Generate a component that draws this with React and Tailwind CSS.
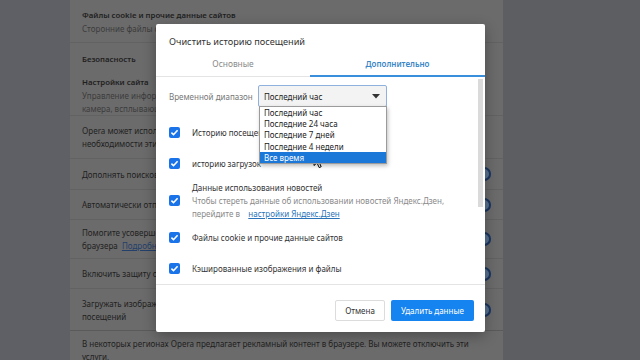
import React from 'react';

const options = ['Последний час', 'Последние 24 часа', 'Последние 7 дней', 'Последние 4 недели', 'Все время'];

const Toggle = () => (
  <div className="flex justify-end w-[26px] h-[14px] rounded-full bg-[#3f5d86] shrink-0">
    <div className="w-[14px] h-[14px] rounded-full border-2 border-[#1b355d] bg-[#58708f]" />
  </div>
);

const Check = () => (
  <div className="w-[11px] h-[11px] rounded-[2px] bg-[#1a73e8] flex items-center justify-center shrink-0">
    <svg width="11" height="11" viewBox="0 0 11 11">
      <path d="M2.4 5.7 L4.5 7.7 L8.6 3.2" fill="none" stroke="white" strokeWidth="1.6" />
    </svg>
  </div>
);

const Cursor = () => (
  <svg width="12" height="17" viewBox="0 0 12 17" className="absolute left-[313px] top-[152px]">
    <path d="M1 1 L1 13.5 L4 10.8 L6.2 15.6 L8.2 14.7 L6 10 L10 10 Z" fill="white" stroke="black" strokeWidth="1" strokeLinejoin="round" />
  </svg>
);

export default function App() {
  return (
    <div className="relative w-[640px] h-[360px] overflow-hidden flex bg-[#5d5e62] font-['Noto_Sans',sans-serif]">
      {/* dimmed page behind */}
      <div className="w-[70px] bg-[#5e6065]" />
      <div className="w-[433px] bg-[#6b6b6b] overflow-hidden text-[8px] leading-[13px] text-[#1f1f1f] whitespace-nowrap">
        <div className="h-[43px] pt-[2px] pl-[12px] flex flex-col justify-center border-b border-[#626262]">
          <div className="text-[7.8px] font-semibold">Файлы cookie и прочие данные сайтов</div>
          <div className="text-[#3c3c3c]">Сторонние файлы cookie разрешены</div>
        </div>
        <div className="h-[28px] pt-[4px] pl-[12px] flex items-center text-[7.8px] font-semibold">Безопасность</div>
        <div className="h-[45px] pt-[5px] pl-[12px] flex flex-col justify-center border-b border-[#626262]">
          <div className="text-[7.8px] font-semibold">Настройки сайта</div>
          <div className="text-[#3c3c3c]">Управление информацией, которую могут использовать сайты (местоположение,</div>
          <div className="text-[#3c3c3c]">камера, всплывающие окна и т. д.)</div>
        </div>
        <div className="h-[43px] pl-[12px] flex flex-col justify-center border-b border-[#626262]">
          <div>Opera может использовать веб-службы для улучшения работы браузера. При</div>
          <div>необходимости эти службы можно отключить.</div>
        </div>
        <div className="h-[31px] pl-[12px] pr-[12px] flex items-center justify-between border-b border-[#626262]">
          <div>Дополнять поисковые запросы и адреса</div>
          <Toggle />
        </div>
        <div className="h-[30px] pl-[12px] pr-[12px] flex items-center justify-between border-b border-[#626262]">
          <div>Автоматически отправлять отчеты об аварийном завершении</div>
          <Toggle />
        </div>
        <div className="h-[39px] pl-[12px] pr-[12px] flex items-center justify-between border-b border-[#626262]">
          <div>
            <div>Помогите усовершенствовать Opera, отправляя информацию</div>
            <div>
              браузера&nbsp;&nbsp;<span className="text-[#233f6b] underline">Подробнее</span>
            </div>
          </div>
          <Toggle />
        </div>
        <div className="h-[30px] pl-[12px] pr-[12px] flex items-center justify-between border-b border-[#626262]">
          <div>Включить защиту от мошенничества</div>
          <Toggle />
        </div>
        <div className="h-[42px] pl-[12px] pr-[12px] flex items-center justify-between border-b border-[#5a5a5a]">
          <div>
            <div>Загружать изображения для предлагаемых источников</div>
            <div>посещений</div>
          </div>
          <Toggle />
        </div>
        <div className="pt-[6px] pl-[12px]">
          <div>В некоторых регионах Opera предлагает рекламный контент в браузере. Вы можете отключить эти</div>
          <div>услуги.</div>
        </div>
      </div>
      <div className="flex-1 bg-[#5d5e61]" />

      {/* dialog */}
      <div className="absolute left-[156px] top-[24px] w-[329px] h-[308px] bg-white rounded-[2px] shadow-[0_4px_14px_rgba(0,0,0,0.3)] flex flex-col whitespace-nowrap">
        <div className="h-[27px] pt-[9px] pl-[13px] text-[9.2px] leading-[18px] text-[#333]">Очистить историю посещений</div>
        <div className="mt-[2px] flex items-end h-[24px] text-[8.4px]">
          <div className="w-[154px] h-[24px] flex items-center justify-center border-b border-[#e4e4e4] text-[#8a8a8a]">Основные</div>
          <div className="flex-1 h-[24px] flex items-center justify-center border-b-2 border-[#3a8fdc] font-semibold text-[8px] text-[#3b86c6]">Дополнительно</div>
        </div>

        <div className="flex flex-1 min-h-0">
          <div className="flex-1 pt-[8px] pl-[13px] text-[8px] leading-[13px]">
            <div className="flex items-center h-[22px]">
              <span className="w-[89px] text-[#777]">Временной диапазон</span>
              <div className="relative w-[129px] h-[22px] border border-[#8fb1de] rounded-[2px] bg-[#f3f3f3] flex items-center justify-between pl-[5px] pr-[6px] text-[#222]">
                <span>Последний час</span>
                <svg width="8" height="5" viewBox="0 0 8 5">
                  <path d="M0 0 L8 0 L4 4.5 Z" fill="#333" />
                </svg>
                <div className="absolute left-0 top-[20px] w-[128px] bg-white border border-[#9b9b9b] shadow-[1px_2px_4px_rgba(0,0,0,0.25)] z-10">
                  {options.map((o, i) => (
                    <div
                      key={o}
                      className={i === 4 ? 'h-[11.2px] leading-[11.2px] pl-[4px] bg-[#1c78d8] text-white' : 'h-[11.2px] leading-[11.2px] pl-[4px] text-[#222]'}
                    >
                      {o}
                    </div>
                  ))}
                </div>
              </div>
            </div>

            <div className="mt-[10px] text-[#333]">
              <div className="h-[31px] flex items-center gap-[12px]">
                <Check />
                <span>Историю посещений</span>
              </div>
              <div className="h-[31px] flex items-center gap-[12px]">
                <Check />
                <span>историю загрузок</span>
              </div>
              <div className="h-[43px] flex items-center gap-[12px]">
                <Check />
                <div>
                  <div>Данные использования новостей</div>
                  <div className="text-[#8a8a8a]">Чтобы стереть данные об использовании новостей Яндекс.Дзен,</div>
                  <div className="text-[#8a8a8a]">
                    перейдите в&nbsp;&nbsp;&nbsp;&nbsp;<span className="text-[#2a73b8] underline">настройки Яндекс.Дзен</span>
                  </div>
                </div>
              </div>
              <div className="h-[31px] flex items-center gap-[12px]">
                <Check />
                <span>Файлы cookie и прочие данные сайтов</span>
              </div>
              <div className="h-[31px] flex items-center gap-[12px]">
                <Check />
                <span>Кэшированные изображения и файлы</span>
              </div>
            </div>
          </div>
          <div className="w-[5px] mr-[2px] pt-[2px]">
            <div className="h-[128px] bg-[#dadada]" />
          </div>
        </div>

        <div className="h-[48px] border-t border-[#e4e4e4] flex justify-end items-start gap-[6px] pt-[15px] pr-[11px] text-[8px]">
          <button className="w-[50px] h-[21px] border border-[#dcdcdc] rounded-[2px] bg-white text-[#333]">Отмена</button>
          <button className="w-[83px] h-[21px] rounded-[2px] bg-[#1583f0] text-white">Удалить данные</button>
        </div>
      </div>

      <Cursor />
    </div>
  );
}
